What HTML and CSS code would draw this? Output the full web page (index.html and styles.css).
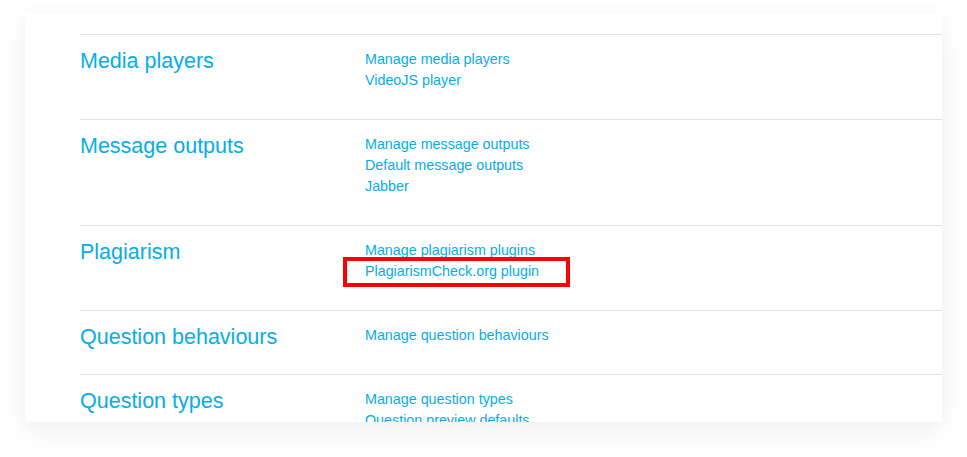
FILE: index.html
```html
<!DOCTYPE html>
<html lang="en">
<head>
    <meta charset="UTF-8">
    <meta name="viewport" content="width=device-width, initial-scale=1.0">
    <title>Site administration - Plugins</title>
    <link rel="stylesheet" href="styles.css">
</head>
<body>
    <div class="card">
        <div class="row">
            <h3 class="row-title">Media players</h3>
            <ul class="links">
                <li><a href="#">Manage media players</a></li>
                <li><a href="#">VideoJS player</a></li>
            </ul>
        </div>
        <div class="row">
            <h3 class="row-title">Message outputs</h3>
            <ul class="links">
                <li><a href="#">Manage message outputs</a></li>
                <li><a href="#">Default message outputs</a></li>
                <li><a href="#">Jabber</a></li>
            </ul>
        </div>
        <div class="row">
            <h3 class="row-title">Plagiarism</h3>
            <ul class="links">
                <li><a href="#">Manage plagiarism plugins</a></li>
                <li class="marked"><a href="#">PlagiarismCheck.org plugin</a></li>
            </ul>
        </div>
        <div class="row">
            <h3 class="row-title">Question behaviours</h3>
            <ul class="links">
                <li><a href="#">Manage question behaviours</a></li>
            </ul>
        </div>
        <div class="row">
            <h3 class="row-title">Question types</h3>
            <ul class="links">
                <li><a href="#">Manage question types</a></li>
                <li><a href="#">Question preview defaults</a></li>
            </ul>
        </div>
    </div>
</body>
</html>
```
FILE: styles.css
```css
*{
    padding: 0;
    margin: 0;
    box-sizing: border-box;
}
body {
    background: #fff;
    font-family: "Liberation Sans", Arial, sans-serif;
    padding: 13px 25px 0 25px;
    height: 457px;
    overflow: hidden;
}
.card {
    height: 409px;
    background: #fff;
    padding: 21px 0 0 55px;
    overflow: hidden;
    box-shadow: 0 12px 28px rgba(0, 0, 0, 0.05), 0 0 14px rgba(0, 0, 0, 0.025);
}
.row {
    display: flex;
    border-top: 1px solid #e2e2e2;
    padding: 14px 0 28px 0;
}
.row-title {
    width: 285px;
    flex-shrink: 0;
    margin-top: 3px;
    font-size: 21.5px;
    line-height: 18px;
    font-weight: 400;
    color: #06ade8;
}
.links {
    list-style: none;
}
.links li {
    font-size: 14.3px;
    line-height: 21px;
}
.links a {
    color: #06ade8;
    text-decoration: none;
}
.marked {
    position: relative;
}
.marked::after {
    content: "";
    position: absolute;
    top: -4px;
    bottom: -5px;
    left: -22px;
    right: -31px;
    border: 4px solid #ff0000;
}
```
